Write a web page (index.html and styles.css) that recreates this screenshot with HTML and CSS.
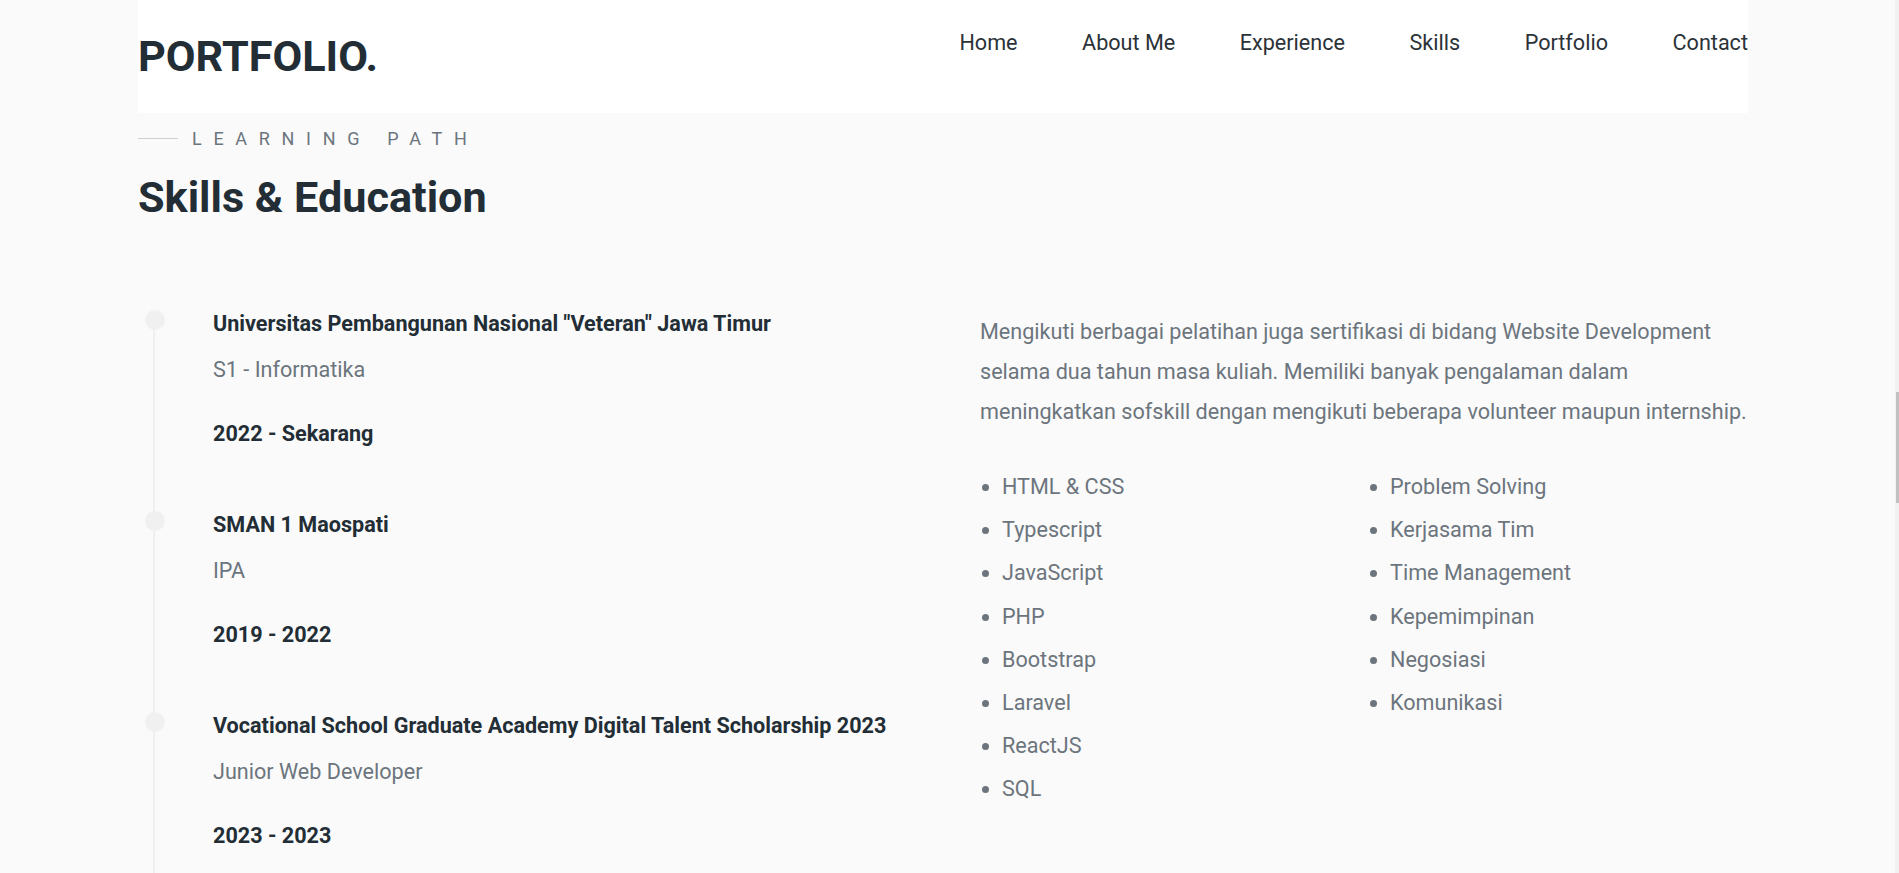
FILE: index.html
```html
<!DOCTYPE html>
<html lang="id">
<head>
<meta charset="utf-8">
<title>Portfolio - Skills &amp; Education</title>
<link rel="stylesheet" href="styles.css">
</head>
<body>
<div class="page">
  <header class="topbar">
    <div class="logo">PORTFOLIO.</div>
    <nav>
      <ul class="nav">
        <li><a href="#">Home</a></li>
        <li><a href="#">About Me</a></li>
        <li><a href="#">Experience</a></li>
        <li><a href="#">Skills</a></li>
        <li><a href="#">Portfolio</a></li>
        <li><a href="#">Contact</a></li>
      </ul>
    </nav>
  </header>

  <section class="skills">
    <div class="eyebrow"><span class="eyebrow-line"></span><span class="eyebrow-text">LEARNING PATH</span></div>
    <h2 class="section-title">Skills &amp; Education</h2>

    <div class="columns">
      <ul class="timeline">
        <li class="tl-item">
          <h3 class="tl-title">Universitas Pembangunan Nasional "Veteran" Jawa Timur</h3>
          <p class="tl-sub">S1 - Informatika</p>
          <p class="tl-year">2022 - Sekarang</p>
        </li>
        <li class="tl-item">
          <h3 class="tl-title">SMAN 1 Maospati</h3>
          <p class="tl-sub">IPA</p>
          <p class="tl-year">2019 - 2022</p>
        </li>
        <li class="tl-item">
          <h3 class="tl-title">Vocational School Graduate Academy Digital Talent Scholarship 2023</h3>
          <p class="tl-sub">Junior Web Developer</p>
          <p class="tl-year">2023 - 2023</p>
        </li>
      </ul>

      <div class="about">
        <p class="about-text">Mengikuti berbagai pelatihan juga sertifikasi di bidang Website Development<br>selama dua tahun masa kuliah. Memiliki banyak pengalaman dalam<br>meningkatkan sofskill dengan mengikuti beberapa volunteer maupun internship.</p>
        <div class="skill-lists">
          <ul class="skill-list">
            <li>HTML &amp; CSS</li>
            <li>Typescript</li>
            <li>JavaScript</li>
            <li>PHP</li>
            <li>Bootstrap</li>
            <li>Laravel</li>
            <li>ReactJS</li>
            <li>SQL</li>
          </ul>
          <ul class="skill-list">
            <li>Problem Solving</li>
            <li>Kerjasama Tim</li>
            <li>Time Management</li>
            <li>Kepemimpinan</li>
            <li>Negosiasi</li>
            <li>Komunikasi</li>
          </ul>
        </div>
      </div>
    </div>
  </section>
</div>
<div class="scrollbar"><div class="scrollbar-thumb"></div></div>
</body>
</html>
```

FILE: styles.css
```css
* { box-sizing: border-box; }

html, body {
  margin: 0;
  padding: 0;
}

body {
  background: #fafafa;
  font-family: Roboto, "Liberation Sans", Arial, sans-serif;
  color: #222d35;
  overflow: hidden;
  height: 873px;
}

.page {
  width: 1610px;
  margin-left: 138px;
}

/* Header */
.topbar {
  background: #ffffff;
  height: 113px;
  padding-top: 30px;
  display: flex;
  justify-content: space-between;
  align-items: flex-start;
}

.logo {
  margin-top: 1px;
  font-size: 43.2px;
  font-weight: 700;
  line-height: normal;
  color: #222d35;
}

.nav {
  list-style: none;
  margin: 0;
  padding: 0;
  display: flex;
  gap: 64.5px;
}

.nav a {
  font-size: 21.6px;
  line-height: normal;
  color: #2b3238;
  text-decoration: none;
}

/* Section heading */
.skills {
  padding-top: 15px;
}

.eyebrow {
  display: flex;
  align-items: center;
  height: 21px;
}

.eyebrow-line {
  width: 40px;
  height: 1px;
  background: #cfcfcf;
  margin-right: 14px;
}

.eyebrow-text {
  font-size: 18px;
  letter-spacing: 11.7px;
  color: #6c757d;
  line-height: normal;
}

.section-title {
  margin: 23px 0 0;
  font-size: 43.2px;
  font-weight: 700;
  line-height: normal;
  color: #222d35;
}

/* Columns */
.columns {
  margin-top: 89px;
  display: grid;
  grid-template-columns: 842px 1fr;
}

/* Timeline */
.timeline {
  list-style: none;
  margin: 0;
  padding: 0 0 0 75px;
  position: relative;
}

.timeline::before {
  content: "";
  position: absolute;
  left: 15px;
  top: 8px;
  bottom: -200px;
  width: 2px;
  background: #efefef;
}

.tl-item {
  position: relative;
  padding-bottom: 67px;
}

.tl-item::before {
  content: "";
  position: absolute;
  left: -68px;
  top: -2px;
  width: 20px;
  height: 20px;
  border-radius: 50%;
  background: #f0f0f0;
}

.tl-title {
  margin: 0 0 22px;
  font-size: 21.6px;
  line-height: 24px;
  font-weight: 700;
  color: #222d35;
}

.tl-sub {
  margin: 0 0 40px;
  font-size: 21.6px;
  line-height: 24px;
  color: #6c757d;
}

.tl-year {
  margin: 0;
  font-size: 21.6px;
  line-height: 24px;
  font-weight: 700;
  color: #222d35;
}

/* About / skills */
.about-text {
  margin: 0 -20px 33px 0;
  font-size: 21.6px;
  line-height: 40px;
  color: #6c757d;
  white-space: nowrap;
}

.skill-lists {
  display: grid;
  grid-template-columns: 388px 1fr;
}

.skill-list {
  margin: 0;
  padding-left: 22px;
  list-style: disc;
  color: #6c757d;
}

.skill-list li {
  font-size: 21.6px;
  line-height: 43.2px;
}

/* Partial scrollbar at right edge */
.scrollbar {
  position: fixed;
  top: 0;
  right: 0;
  width: 4px;
  height: 873px;
  background: #f1f1f1;
}

.scrollbar-thumb {
  margin-top: 392px;
  margin-left: 1px;
  width: 3px;
  height: 111px;
  background: #c1c1c1;
}
```
